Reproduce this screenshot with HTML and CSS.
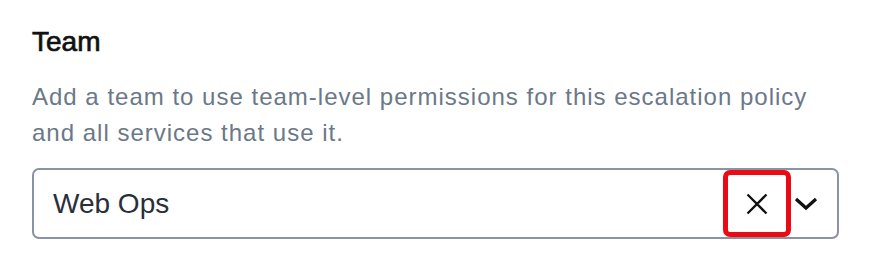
FILE: index.html
```html
<!DOCTYPE html>
<html>
<head>
<meta charset="utf-8">
<link rel="stylesheet" href="styles.css">
</head>
<body>
<div class="field">
  <div class="label">Team</div>
  <div class="help">Add a team to use team-level permissions for this escalation policy and all services that use it.</div>
  <div class="select">
    <div class="value">Web Ops</div>
    <div class="indicators">
      <div class="clear">
        <svg width="22" height="22" viewBox="0 0 22 22"><path d="M1.5 1.5 L20.5 20.5 M20.5 1.5 L1.5 20.5" stroke="#111" stroke-width="2.3" fill="none"/></svg>
      </div>
      <div class="chevron">
        <svg width="24" height="14" viewBox="0 0 24 14"><path d="M2 2 L12 11 L22 2" stroke="#111" stroke-width="3.2" fill="none"/></svg>
      </div>
    </div>
  </div>
</div>
</body>
</html>
```

FILE: styles.css
```css
html, body {
  margin: 0;
  padding: 0;
  background: #ffffff;
}
body {
  font-family: "Liberation Sans", Arial, sans-serif;
}
.field {
  padding: 24px 45px 0 32px;
}
.label {
  font-size: 28px;
  line-height: 36px;
  font-weight: 400;
  color: #111111;
  -webkit-text-stroke: 0.7px #111111;
}
.help {
  margin-top: 19px;
  font-size: 24px;
  line-height: 36px;
  letter-spacing: 1px;
  color: #6a7889;
  max-width: 800px;
}
.select {
  margin-top: 17px;
  height: 67px;
  border: 2px solid #8a93a3;
  border-radius: 7px;
  display: flex;
  align-items: center;
  justify-content: space-between;
}
.value {
  padding-left: 19px;
  font-size: 28px;
  color: #2a2f3b;
}
.indicators {
  display: flex;
  align-items: center;
  height: 100%;
}
.clear {
  box-sizing: border-box;
  width: 68px;
  height: 67px;
  border: 5px solid #ea0a14;
  border-radius: 7px;
  display: flex;
  align-items: center;
  justify-content: center;
}
.chevron {
  display: flex;
  align-items: center;
  padding: 0 19px 0 3px;
}
```
